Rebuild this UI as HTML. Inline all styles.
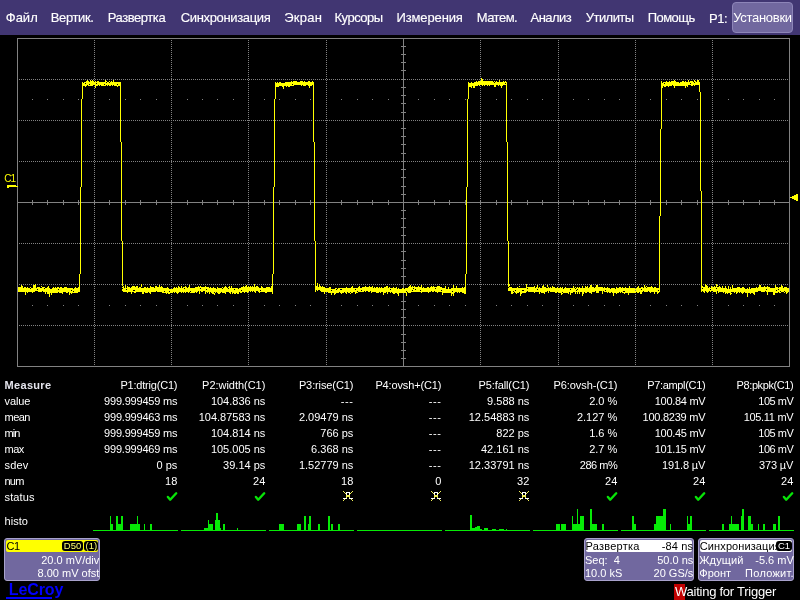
<!DOCTYPE html>
<html><head><meta charset="utf-8"><title>LeCroy</title>
<style>
html,body{margin:0;padding:0;background:#000;}
body{width:800px;height:600px;overflow:hidden;position:relative;font-family:"Liberation Sans",Arial,sans-serif;color:#fff;}
#menu{position:absolute;left:0;top:0;width:800px;height:35px;background:#413672;}
.mi{position:absolute;top:9px;font-size:13px;line-height:16px;color:#fff;white-space:nowrap;-webkit-text-stroke:0.15px #fff}
#setup{position:absolute;left:732px;top:2px;width:61px;height:30.5px;box-sizing:border-box;border:1px solid #8d85b8;border-radius:4px;background:#71689f;font-size:13px;line-height:30px;text-align:center;color:#fff;letter-spacing:-0.3px;white-space:nowrap}
#root{position:absolute;left:0;top:0;width:800px;height:600px;will-change:transform;}
#scope{position:absolute;left:0;top:0;}
.dot{stroke:#828282;stroke-width:1;stroke-dasharray:1 1;shape-rendering:crispEdges}
.lbl{position:absolute;left:4.6px;font-size:11px;line-height:14px;color:#fff;white-space:nowrap;letter-spacing:-0.35px}
.b{font-weight:bold;letter-spacing:0.3px;color:#e4e4ec}
.hdr{letter-spacing:-0.28px !important}
.val{position:absolute;font-size:11px;line-height:14px;color:#fff;white-space:nowrap;text-align:right;letter-spacing:-0.2px}
.ico{position:absolute;line-height:0}
.box{position:absolute;background:#71689f;border:1px solid #a8a2cc;border-radius:3px;box-sizing:border-box;font-size:11px;color:#fff}
.box .hd{position:absolute;left:1px;right:1px;top:1px;height:12px;border-radius:2px;line-height:12px;color:#000;white-space:nowrap}
.box .r{position:absolute;white-space:nowrap;line-height:12px}
.tag{position:absolute;background:#000;color:#ffff70;border-radius:3px;font-size:9.5px;line-height:10px;height:10px;top:1px;text-align:center;letter-spacing:0}
</style></head><body><div id="root">
<div id="menu"><span class="mi" style="left:5.75px;top:10px;letter-spacing:0px">Файл</span><span class="mi" style="left:50.75px;top:10px;letter-spacing:-0.375px">Вертик.</span><span class="mi" style="left:107.75px;top:10px;letter-spacing:-0.44px">Развертка</span><span class="mi" style="left:180.75px;top:10px;letter-spacing:-0.35px">Синхронизация</span><span class="mi" style="left:284.25px;top:10px;letter-spacing:0.25px">Экран</span><span class="mi" style="left:334.5px;top:10px;letter-spacing:-0.5px">Курсоры</span><span class="mi" style="left:396.5px;top:10px;letter-spacing:-0.125px">Измерения</span><span class="mi" style="left:476.7px;top:10px;letter-spacing:-0.5px">Матем.</span><span class="mi" style="left:530.5px;top:10px;letter-spacing:-0.54px">Анализ</span><span class="mi" style="left:585.8px;top:10px;letter-spacing:-0.55px">Утилиты</span><span class="mi" style="left:647.75px;top:10px;letter-spacing:-0.55px">Помощь</span><span class="mi" style="left:709px;top:11px;letter-spacing:-0.5px">P1:</span><div id="setup">Установки</div></div>
<svg id="scope" width="800" height="600" viewBox="0 0 800 600">
<line x1="94.5" y1="40" x2="94.5" y2="366" class="dot"/>
<line x1="171.5" y1="40" x2="171.5" y2="366" class="dot"/>
<line x1="248.5" y1="40" x2="248.5" y2="366" class="dot"/>
<line x1="326.5" y1="40" x2="326.5" y2="366" class="dot"/>
<line x1="480.5" y1="40" x2="480.5" y2="366" class="dot"/>
<line x1="558.5" y1="40" x2="558.5" y2="366" class="dot"/>
<line x1="635.5" y1="40" x2="635.5" y2="366" class="dot"/>
<line x1="712.5" y1="40" x2="712.5" y2="366" class="dot"/>
<line x1="19" y1="79.5" x2="789" y2="79.5" class="dot"/>
<line x1="19" y1="120.5" x2="789" y2="120.5" class="dot"/>
<line x1="19" y1="161.5" x2="789" y2="161.5" class="dot"/>
<line x1="19" y1="243.5" x2="789" y2="243.5" class="dot"/>
<line x1="19" y1="284.5" x2="789" y2="284.5" class="dot"/>
<line x1="19" y1="325.5" x2="789" y2="325.5" class="dot"/>
<rect x="32" y="99" width="1" height="1" fill="#828282"/>
<rect x="47" y="99" width="1" height="1" fill="#828282"/>
<rect x="63" y="99" width="1" height="1" fill="#828282"/>
<rect x="78" y="99" width="1" height="1" fill="#828282"/>
<rect x="109" y="99" width="1" height="1" fill="#828282"/>
<rect x="125" y="99" width="1" height="1" fill="#828282"/>
<rect x="140" y="99" width="1" height="1" fill="#828282"/>
<rect x="156" y="99" width="1" height="1" fill="#828282"/>
<rect x="187" y="99" width="1" height="1" fill="#828282"/>
<rect x="202" y="99" width="1" height="1" fill="#828282"/>
<rect x="217" y="99" width="1" height="1" fill="#828282"/>
<rect x="233" y="99" width="1" height="1" fill="#828282"/>
<rect x="264" y="99" width="1" height="1" fill="#828282"/>
<rect x="279" y="99" width="1" height="1" fill="#828282"/>
<rect x="295" y="99" width="1" height="1" fill="#828282"/>
<rect x="310" y="99" width="1" height="1" fill="#828282"/>
<rect x="341" y="99" width="1" height="1" fill="#828282"/>
<rect x="357" y="99" width="1" height="1" fill="#828282"/>
<rect x="372" y="99" width="1" height="1" fill="#828282"/>
<rect x="388" y="99" width="1" height="1" fill="#828282"/>
<rect x="418" y="99" width="1" height="1" fill="#828282"/>
<rect x="434" y="99" width="1" height="1" fill="#828282"/>
<rect x="449" y="99" width="1" height="1" fill="#828282"/>
<rect x="465" y="99" width="1" height="1" fill="#828282"/>
<rect x="496" y="99" width="1" height="1" fill="#828282"/>
<rect x="511" y="99" width="1" height="1" fill="#828282"/>
<rect x="527" y="99" width="1" height="1" fill="#828282"/>
<rect x="542" y="99" width="1" height="1" fill="#828282"/>
<rect x="573" y="99" width="1" height="1" fill="#828282"/>
<rect x="588" y="99" width="1" height="1" fill="#828282"/>
<rect x="604" y="99" width="1" height="1" fill="#828282"/>
<rect x="619" y="99" width="1" height="1" fill="#828282"/>
<rect x="650" y="99" width="1" height="1" fill="#828282"/>
<rect x="666" y="99" width="1" height="1" fill="#828282"/>
<rect x="681" y="99" width="1" height="1" fill="#828282"/>
<rect x="697" y="99" width="1" height="1" fill="#828282"/>
<rect x="728" y="99" width="1" height="1" fill="#828282"/>
<rect x="743" y="99" width="1" height="1" fill="#828282"/>
<rect x="759" y="99" width="1" height="1" fill="#828282"/>
<rect x="774" y="99" width="1" height="1" fill="#828282"/>
<rect x="32" y="305" width="1" height="1" fill="#828282"/>
<rect x="47" y="305" width="1" height="1" fill="#828282"/>
<rect x="63" y="305" width="1" height="1" fill="#828282"/>
<rect x="78" y="305" width="1" height="1" fill="#828282"/>
<rect x="109" y="305" width="1" height="1" fill="#828282"/>
<rect x="125" y="305" width="1" height="1" fill="#828282"/>
<rect x="140" y="305" width="1" height="1" fill="#828282"/>
<rect x="156" y="305" width="1" height="1" fill="#828282"/>
<rect x="187" y="305" width="1" height="1" fill="#828282"/>
<rect x="202" y="305" width="1" height="1" fill="#828282"/>
<rect x="217" y="305" width="1" height="1" fill="#828282"/>
<rect x="233" y="305" width="1" height="1" fill="#828282"/>
<rect x="264" y="305" width="1" height="1" fill="#828282"/>
<rect x="279" y="305" width="1" height="1" fill="#828282"/>
<rect x="295" y="305" width="1" height="1" fill="#828282"/>
<rect x="310" y="305" width="1" height="1" fill="#828282"/>
<rect x="341" y="305" width="1" height="1" fill="#828282"/>
<rect x="357" y="305" width="1" height="1" fill="#828282"/>
<rect x="372" y="305" width="1" height="1" fill="#828282"/>
<rect x="388" y="305" width="1" height="1" fill="#828282"/>
<rect x="418" y="305" width="1" height="1" fill="#828282"/>
<rect x="434" y="305" width="1" height="1" fill="#828282"/>
<rect x="449" y="305" width="1" height="1" fill="#828282"/>
<rect x="465" y="305" width="1" height="1" fill="#828282"/>
<rect x="496" y="305" width="1" height="1" fill="#828282"/>
<rect x="511" y="305" width="1" height="1" fill="#828282"/>
<rect x="527" y="305" width="1" height="1" fill="#828282"/>
<rect x="542" y="305" width="1" height="1" fill="#828282"/>
<rect x="573" y="305" width="1" height="1" fill="#828282"/>
<rect x="588" y="305" width="1" height="1" fill="#828282"/>
<rect x="604" y="305" width="1" height="1" fill="#828282"/>
<rect x="619" y="305" width="1" height="1" fill="#828282"/>
<rect x="650" y="305" width="1" height="1" fill="#828282"/>
<rect x="666" y="305" width="1" height="1" fill="#828282"/>
<rect x="681" y="305" width="1" height="1" fill="#828282"/>
<rect x="697" y="305" width="1" height="1" fill="#828282"/>
<rect x="728" y="305" width="1" height="1" fill="#828282"/>
<rect x="743" y="305" width="1" height="1" fill="#828282"/>
<rect x="759" y="305" width="1" height="1" fill="#828282"/>
<rect x="774" y="305" width="1" height="1" fill="#828282"/>
<rect x="403" y="38" width="1" height="328" fill="#828282"/>
<rect x="17" y="202" width="772" height="1" fill="#828282"/>
<rect x="32" y="200" width="1" height="5" fill="#828282"/>
<rect x="47" y="200" width="1" height="5" fill="#828282"/>
<rect x="63" y="200" width="1" height="5" fill="#828282"/>
<rect x="78" y="200" width="1" height="5" fill="#828282"/>
<rect x="94" y="200" width="1" height="5" fill="#828282"/>
<rect x="109" y="200" width="1" height="5" fill="#828282"/>
<rect x="125" y="200" width="1" height="5" fill="#828282"/>
<rect x="140" y="200" width="1" height="5" fill="#828282"/>
<rect x="156" y="200" width="1" height="5" fill="#828282"/>
<rect x="171" y="200" width="1" height="5" fill="#828282"/>
<rect x="187" y="200" width="1" height="5" fill="#828282"/>
<rect x="202" y="200" width="1" height="5" fill="#828282"/>
<rect x="217" y="200" width="1" height="5" fill="#828282"/>
<rect x="233" y="200" width="1" height="5" fill="#828282"/>
<rect x="248" y="200" width="1" height="5" fill="#828282"/>
<rect x="264" y="200" width="1" height="5" fill="#828282"/>
<rect x="279" y="200" width="1" height="5" fill="#828282"/>
<rect x="295" y="200" width="1" height="5" fill="#828282"/>
<rect x="310" y="200" width="1" height="5" fill="#828282"/>
<rect x="326" y="200" width="1" height="5" fill="#828282"/>
<rect x="341" y="200" width="1" height="5" fill="#828282"/>
<rect x="357" y="200" width="1" height="5" fill="#828282"/>
<rect x="372" y="200" width="1" height="5" fill="#828282"/>
<rect x="388" y="200" width="1" height="5" fill="#828282"/>
<rect x="403" y="200" width="1" height="5" fill="#828282"/>
<rect x="418" y="200" width="1" height="5" fill="#828282"/>
<rect x="434" y="200" width="1" height="5" fill="#828282"/>
<rect x="449" y="200" width="1" height="5" fill="#828282"/>
<rect x="465" y="200" width="1" height="5" fill="#828282"/>
<rect x="480" y="200" width="1" height="5" fill="#828282"/>
<rect x="496" y="200" width="1" height="5" fill="#828282"/>
<rect x="511" y="200" width="1" height="5" fill="#828282"/>
<rect x="527" y="200" width="1" height="5" fill="#828282"/>
<rect x="542" y="200" width="1" height="5" fill="#828282"/>
<rect x="558" y="200" width="1" height="5" fill="#828282"/>
<rect x="573" y="200" width="1" height="5" fill="#828282"/>
<rect x="588" y="200" width="1" height="5" fill="#828282"/>
<rect x="604" y="200" width="1" height="5" fill="#828282"/>
<rect x="619" y="200" width="1" height="5" fill="#828282"/>
<rect x="635" y="200" width="1" height="5" fill="#828282"/>
<rect x="650" y="200" width="1" height="5" fill="#828282"/>
<rect x="666" y="200" width="1" height="5" fill="#828282"/>
<rect x="681" y="200" width="1" height="5" fill="#828282"/>
<rect x="697" y="200" width="1" height="5" fill="#828282"/>
<rect x="712" y="200" width="1" height="5" fill="#828282"/>
<rect x="728" y="200" width="1" height="5" fill="#828282"/>
<rect x="743" y="200" width="1" height="5" fill="#828282"/>
<rect x="759" y="200" width="1" height="5" fill="#828282"/>
<rect x="774" y="200" width="1" height="5" fill="#828282"/>
<rect x="401" y="46" width="5" height="1" fill="#828282"/>
<rect x="401" y="54" width="5" height="1" fill="#828282"/>
<rect x="401" y="62" width="5" height="1" fill="#828282"/>
<rect x="401" y="70" width="5" height="1" fill="#828282"/>
<rect x="401" y="79" width="5" height="1" fill="#828282"/>
<rect x="401" y="87" width="5" height="1" fill="#828282"/>
<rect x="401" y="95" width="5" height="1" fill="#828282"/>
<rect x="401" y="103" width="5" height="1" fill="#828282"/>
<rect x="401" y="112" width="5" height="1" fill="#828282"/>
<rect x="401" y="120" width="5" height="1" fill="#828282"/>
<rect x="401" y="128" width="5" height="1" fill="#828282"/>
<rect x="401" y="136" width="5" height="1" fill="#828282"/>
<rect x="401" y="144" width="5" height="1" fill="#828282"/>
<rect x="401" y="153" width="5" height="1" fill="#828282"/>
<rect x="401" y="161" width="5" height="1" fill="#828282"/>
<rect x="401" y="169" width="5" height="1" fill="#828282"/>
<rect x="401" y="177" width="5" height="1" fill="#828282"/>
<rect x="401" y="186" width="5" height="1" fill="#828282"/>
<rect x="401" y="194" width="5" height="1" fill="#828282"/>
<rect x="401" y="202" width="5" height="1" fill="#828282"/>
<rect x="401" y="210" width="5" height="1" fill="#828282"/>
<rect x="401" y="218" width="5" height="1" fill="#828282"/>
<rect x="401" y="227" width="5" height="1" fill="#828282"/>
<rect x="401" y="235" width="5" height="1" fill="#828282"/>
<rect x="401" y="243" width="5" height="1" fill="#828282"/>
<rect x="401" y="251" width="5" height="1" fill="#828282"/>
<rect x="401" y="260" width="5" height="1" fill="#828282"/>
<rect x="401" y="268" width="5" height="1" fill="#828282"/>
<rect x="401" y="276" width="5" height="1" fill="#828282"/>
<rect x="401" y="284" width="5" height="1" fill="#828282"/>
<rect x="401" y="292" width="5" height="1" fill="#828282"/>
<rect x="401" y="301" width="5" height="1" fill="#828282"/>
<rect x="401" y="309" width="5" height="1" fill="#828282"/>
<rect x="401" y="317" width="5" height="1" fill="#828282"/>
<rect x="401" y="325" width="5" height="1" fill="#828282"/>
<rect x="401" y="334" width="5" height="1" fill="#828282"/>
<rect x="401" y="342" width="5" height="1" fill="#828282"/>
<rect x="401" y="350" width="5" height="1" fill="#828282"/>
<rect x="401" y="358" width="5" height="1" fill="#828282"/>
<rect x="17.5" y="38.5" width="772" height="328" fill="none" stroke="#828282" stroke-width="1"/>
<g fill="#ffff00"><rect x="82" y="82" width="1" height="17"/><rect x="81" y="99" width="1" height="88"/><rect x="80" y="187" width="1" height="87"/><rect x="79" y="274" width="1" height="18"/><rect x="120" y="85" width="1" height="57"/><rect x="121" y="142" width="1" height="99"/><rect x="122" y="241" width="1" height="45"/><rect x="275" y="82" width="1" height="17"/><rect x="274" y="99" width="1" height="88"/><rect x="273" y="187" width="1" height="87"/><rect x="272" y="274" width="1" height="18"/><rect x="313" y="85" width="1" height="57"/><rect x="314" y="142" width="1" height="99"/><rect x="315" y="241" width="1" height="45"/><rect x="468" y="82" width="1" height="17"/><rect x="467" y="99" width="1" height="88"/><rect x="466" y="187" width="1" height="87"/><rect x="465" y="274" width="1" height="18"/><rect x="506" y="85" width="1" height="57"/><rect x="507" y="142" width="1" height="99"/><rect x="508" y="241" width="1" height="45"/><rect x="661" y="82" width="1" height="47"/><rect x="660" y="129" width="1" height="87"/><rect x="659" y="216" width="1" height="76"/><rect x="699" y="85" width="1" height="7"/><rect x="700" y="92" width="1" height="99"/><rect x="701" y="191" width="1" height="95"/></g>
<path d="M18.5 287V292M19.5 287V292M20.5 287V292M21.5 285V292M22.5 286V292M23.5 288V292M24.5 287V292M25.5 287V295M26.5 288V292M27.5 287V293M28.5 288V292M29.5 288V292M30.5 287V288M30.5 289V292M31.5 288V292M32.5 288V293M33.5 285V292M34.5 285V292M35.5 284V291M36.5 288V291M37.5 287V289M37.5 290V291M38.5 287V292M39.5 287V292M40.5 288V292M41.5 286V287M41.5 288V292M42.5 287V291M43.5 287V292M44.5 287V288M44.5 289V292M45.5 288V294M46.5 288V292M47.5 287V294M48.5 286V294M49.5 288V297M50.5 289V293M51.5 289V295M52.5 288V293M53.5 287V293M54.5 288V293M55.5 287V293M56.5 288V293M57.5 287V293M58.5 287V289M58.5 290V292M59.5 288V293M60.5 287V293M61.5 287V293M62.5 288V294M63.5 288V292M64.5 287V292M65.5 287V292M66.5 287V293M67.5 288V293M68.5 288V292M69.5 288V295M70.5 288V293M71.5 288V290M71.5 291V294M72.5 288V293M73.5 289V291M73.5 292V293M74.5 288V293M75.5 287V293M76.5 288V293M77.5 288V293M78.5 287V292M79.5 288V292M82.5 83V86M83.5 83V86M84.5 82V86M85.5 82V83M85.5 84V87M86.5 81V86M87.5 80V85M88.5 81V86M89.5 82V84M89.5 85V86M90.5 80V86M91.5 81V86M92.5 80V86M93.5 81V85M94.5 82V85M95.5 81V88M96.5 82V83M96.5 84V86M97.5 81V86M98.5 81V85M99.5 82V86M100.5 82V85M101.5 82V86M102.5 82V86M103.5 82V86M104.5 82V84M104.5 85V86M105.5 80V86M106.5 81V82M106.5 83V85M107.5 82V86M108.5 82V85M109.5 81V82M109.5 83V86M110.5 82V86M111.5 81V85M112.5 82V86M113.5 80V85M114.5 82V86M115.5 82V86M116.5 82V86M117.5 82V84M117.5 85V87M118.5 82V86M119.5 82V86M120.5 82V86M122.5 287V288M122.5 289V291M123.5 286V292M124.5 288V292M125.5 285V292M126.5 288V289M126.5 290V292M127.5 286V293M128.5 287V292M129.5 287V292M130.5 288V292M131.5 287V294M132.5 286V292M133.5 286V290M133.5 291V292M134.5 286V290M134.5 291V293M135.5 287V293M136.5 286V292M137.5 286V292M138.5 288V292M139.5 287V292M140.5 287V292M141.5 284V287M141.5 288V292M142.5 288V294M143.5 288V294M144.5 287V292M145.5 287V293M146.5 288V293M147.5 287V293M148.5 288V292M149.5 288V293M150.5 286V294M151.5 287V292M152.5 287V292M153.5 287V292M154.5 288V292M155.5 286V292M156.5 286V291M157.5 287V292M158.5 287V292M159.5 285V292M160.5 287V292M161.5 286V292M162.5 287V293M163.5 288V293M164.5 288V291M164.5 292V293M165.5 288V293M166.5 288V294M167.5 287V293M168.5 288V294M169.5 289V291M169.5 292V294M170.5 289V293M171.5 289V293M172.5 289V293M173.5 288V292M174.5 287V293M175.5 288V292M176.5 287V293M177.5 288V294M178.5 286V293M179.5 287V292M180.5 288V292M181.5 286V293M182.5 288V292M183.5 287V293M184.5 287V288M184.5 289V292M185.5 286V293M186.5 287V292M187.5 288V292M188.5 287V293M189.5 285V292M190.5 288V291M190.5 292V293M191.5 288V293M192.5 288V293M193.5 288V293M194.5 288V293M195.5 287V292M196.5 287V293M197.5 287V292M198.5 286V291M199.5 287V294M200.5 286V288M200.5 289V291M201.5 287V292M202.5 287V292M203.5 287V291M204.5 287V291M205.5 286V294M206.5 287V289M206.5 290V292M207.5 287V293M208.5 287V292M209.5 288V294M210.5 287V292M211.5 288V293M212.5 288V294M213.5 287V294M214.5 288V292M214.5 293V295M215.5 288V293M216.5 289V292M217.5 287V293M218.5 288V294M219.5 288V294M220.5 288V293M221.5 288V292M222.5 287V288M222.5 289V293M223.5 288V293M224.5 287V293M225.5 286V294M226.5 287V292M227.5 288V292M228.5 287V288M228.5 289V292M229.5 286V293M230.5 288V294M231.5 286V292M232.5 288V294M233.5 288V293M234.5 288V289M234.5 290V294M235.5 288V294M236.5 288V293M237.5 288V294M238.5 289V294M239.5 288V292M240.5 288V293M241.5 287V290M241.5 291V293M242.5 287V292M243.5 286V292M244.5 287V293M245.5 286V292M246.5 285V292M247.5 287V293M248.5 286V292M249.5 287V291M250.5 286V292M251.5 287V291M252.5 286V292M253.5 287V291M254.5 284V292M255.5 287V293M256.5 286V291M257.5 286V291M258.5 287V292M259.5 288V293M260.5 288V290M260.5 291V292M261.5 286V292M262.5 287V292M263.5 288V292M264.5 288V292M265.5 288V293M266.5 287V293M267.5 287V292M268.5 287V292M269.5 287V292M270.5 288V292M271.5 286V292M272.5 288V294M275.5 83V87M276.5 83V87M277.5 82V87M278.5 83V87M279.5 82V86M280.5 82V86M281.5 83V86M282.5 83V87M283.5 83V89M284.5 83V86M285.5 82V86M286.5 82V87M287.5 82V86M288.5 82V87M289.5 82V87M290.5 82V86M291.5 81V86M292.5 82V84M292.5 85V86M293.5 81V86M294.5 81V85M295.5 81V85M296.5 81V85M297.5 82V85M298.5 82V85M299.5 82V85M300.5 81V85M301.5 81V86M302.5 81V85M303.5 82V86M304.5 81V86M305.5 82V86M306.5 82V85M307.5 82V85M308.5 81V86M309.5 81V88M310.5 82V86M311.5 82V86M312.5 81V85M313.5 82V85M315.5 286V292M316.5 286V290M317.5 283V291M318.5 287V290M319.5 284V290M320.5 286V291M321.5 287V292M322.5 286V292M323.5 287V292M324.5 287V294M325.5 288V292M326.5 288V292M327.5 288V292M328.5 288V293M329.5 287V293M330.5 287V293M331.5 289V290M331.5 291V295M332.5 289V293M333.5 289V293M334.5 289V295M335.5 288V294M336.5 288V289M336.5 290V293M337.5 289V293M338.5 288V293M339.5 288V292M340.5 288V289M340.5 290V293M341.5 288V289M341.5 290V294M342.5 288V293M343.5 288V293M344.5 288V292M345.5 288V293M346.5 287V294M347.5 288V292M348.5 288V293M349.5 288V293M350.5 288V292M350.5 293V294M351.5 287V293M352.5 286V293M353.5 288V292M354.5 288V292M355.5 288V289M355.5 290V294M356.5 288V293M357.5 288V291M357.5 292V293M358.5 287V292M359.5 286V292M360.5 288V292M361.5 288V290M361.5 291V292M362.5 287V292M363.5 287V292M364.5 287V291M365.5 286V292M366.5 287V291M367.5 287V291M368.5 287V292M369.5 286V292M370.5 287V291M371.5 287V293M372.5 286V292M373.5 288V292M374.5 287V292M375.5 288V292M376.5 287V293M377.5 287V293M378.5 288V293M379.5 287V292M380.5 288V293M381.5 287V292M382.5 288V292M383.5 288V295M384.5 287V293M385.5 287V293M386.5 286V292M387.5 286V294M388.5 288V292M389.5 287V292M390.5 288V289M390.5 290V293M391.5 288V292M392.5 288V293M393.5 287V294M394.5 288V294M395.5 288V293M396.5 287V293M397.5 289V294M398.5 288V296M399.5 289V293M400.5 289V293M401.5 289V293M402.5 288V293M403.5 288V293M404.5 289V293M405.5 288V293M406.5 288V291M406.5 292V296M407.5 288V292M408.5 287V293M409.5 286V293M410.5 285V293M411.5 287V292M412.5 286V290M412.5 291V292M413.5 287V288M413.5 289V292M414.5 286V292M415.5 287V289M415.5 290V292M416.5 287V292M417.5 287V292M418.5 286V292M419.5 287V292M420.5 287V290M420.5 291V292M421.5 285V293M422.5 288V292M423.5 287V292M424.5 288V292M425.5 288V292M426.5 288V292M427.5 287V292M428.5 287V293M429.5 288V292M430.5 287V292M431.5 286V291M432.5 287V292M433.5 286V292M434.5 287V291M435.5 287V288M435.5 289V292M436.5 287V292M437.5 286V293M438.5 286V292M439.5 286V292M440.5 287V292M441.5 287V290M441.5 291V292M442.5 288V295M443.5 288V293M444.5 288V293M445.5 286V293M446.5 289V293M447.5 289V293M448.5 287V293M449.5 289V293M450.5 289V293M451.5 288V296M452.5 288V291M452.5 292V294M453.5 285V296M454.5 288V293M455.5 288V292M456.5 286V292M457.5 288V293M458.5 288V292M459.5 288V293M460.5 288V292M461.5 288V292M462.5 287V293M463.5 288V293M464.5 287V294M465.5 288V294M468.5 84V88M469.5 83V87M470.5 83V87M471.5 82V88M472.5 83V86M473.5 83V88M474.5 82V88M475.5 82V86M476.5 81V86M477.5 82V86M478.5 81V85M479.5 81V86M480.5 81V85M481.5 78V85M482.5 79V86M483.5 81V85M484.5 81V86M485.5 81V85M486.5 81V85M487.5 81V86M488.5 81V85M489.5 81V86M490.5 81V85M491.5 81V85M492.5 81V85M493.5 82V85M494.5 81V82M494.5 83V87M495.5 82V87M496.5 81V85M497.5 82V85M498.5 82V86M499.5 80V85M500.5 82V86M501.5 82V88M502.5 82V86M503.5 81V85M504.5 82V85M505.5 81V83M505.5 84V85M506.5 82V86M508.5 286V287M508.5 288V291M509.5 284V286M509.5 287V291M510.5 287V291M511.5 287V294M512.5 288V294M513.5 288V291M513.5 292V293M514.5 288V292M515.5 288V290M515.5 291V293M516.5 288V294M517.5 287V293M518.5 288V293M519.5 286V287M519.5 288V292M520.5 288V296M521.5 288V294M522.5 288V290M522.5 291V293M523.5 288V290M523.5 291V293M524.5 288V293M525.5 288V293M526.5 284V292M527.5 287V288M527.5 289V291M528.5 287V292M529.5 287V292M530.5 287V292M531.5 287V292M532.5 287V292M533.5 287V292M534.5 286V293M535.5 288V292M536.5 287V292M537.5 285V289M537.5 290V292M538.5 288V292M539.5 287V294M540.5 288V292M541.5 288V293M542.5 286V293M543.5 285V293M544.5 287V294M545.5 287V292M546.5 288V292M547.5 285V287M547.5 288V291M548.5 287V293M549.5 288V291M550.5 287V292M551.5 288V292M552.5 286V292M553.5 287V292M554.5 287V292M555.5 288V293M556.5 288V293M557.5 287V292M558.5 288V293M559.5 288V293M560.5 287V293M561.5 288V295M562.5 287V292M562.5 293V294M563.5 289V293M564.5 288V293M565.5 287V293M566.5 288V293M567.5 288V293M568.5 288V294M569.5 288V292M570.5 288V289M570.5 290V295M571.5 288V293M572.5 288V293M573.5 286V292M574.5 288V292M575.5 287V288M575.5 289V294M576.5 288V290M576.5 291V292M577.5 287V289M577.5 290V294M578.5 288V292M579.5 287V294M580.5 288V292M581.5 288V292M582.5 286V296M583.5 288V294M584.5 288V292M585.5 286V293M586.5 287V293M587.5 286V292M588.5 288V292M589.5 287V293M590.5 285V293M591.5 285V294M592.5 287V292M593.5 287V292M594.5 288V292M595.5 287V291M596.5 285V293M597.5 285V293M598.5 287V293M599.5 287V291M600.5 287V291M601.5 287V291M602.5 287V294M603.5 288V291M604.5 287V292M605.5 288V290M605.5 291V292M606.5 288V292M607.5 287V293M608.5 288V292M609.5 288V293M610.5 289V293M611.5 288V292M612.5 288V293M613.5 288V296M614.5 288V293M615.5 289V293M616.5 287V294M617.5 288V293M618.5 288V293M619.5 287V292M620.5 287V293M621.5 288V292M622.5 287V293M623.5 288V291M623.5 292V293M624.5 288V291M624.5 292V294M625.5 287V293M626.5 288V293M627.5 288V293M628.5 288V295M629.5 286V293M630.5 288V293M631.5 288V293M632.5 288V293M633.5 288V293M634.5 288V293M635.5 289V290M635.5 291V293M636.5 288V292M637.5 287V293M638.5 286V293M639.5 288V292M640.5 288V294M641.5 287V289M641.5 290V294M642.5 287V292M643.5 288V291M644.5 285V292M645.5 287V292M646.5 286V287M646.5 288V292M647.5 287V292M648.5 287V291M649.5 287V292M650.5 287V293M651.5 286V292M652.5 287V292M653.5 288V292M654.5 287V294M655.5 287V292M656.5 288V292M657.5 288V294M658.5 288V290M658.5 291V293M661.5 81V87M662.5 83V88M663.5 82V86M664.5 82V83M664.5 84V87M665.5 82V87M666.5 81V86M667.5 82V86M668.5 82V87M669.5 81V86M670.5 82V86M671.5 81V86M672.5 81V85M673.5 81V86M674.5 80V88M675.5 81V86M676.5 82V86M677.5 82V86M678.5 82V86M679.5 83V86M680.5 82V86M681.5 82V86M682.5 81V86M683.5 81V86M684.5 82V86M685.5 81V88M686.5 82V86M687.5 82V87M688.5 80V85M689.5 82V85M690.5 81V83M690.5 84V85M691.5 81V86M692.5 81V86M693.5 82V85M694.5 80V82M694.5 83V86M695.5 81V85M696.5 82V85M697.5 80V85M698.5 80V85M699.5 82V85M701.5 286V292M702.5 286V288M702.5 289V291M703.5 287V292M704.5 287V293M705.5 284V291M706.5 285V292M707.5 286V293M708.5 288V292M709.5 287V291M710.5 288V289M710.5 290V292M711.5 286V291M712.5 287V291M713.5 287V292M714.5 286V292M715.5 287V292M716.5 284V288M716.5 289V294M717.5 285V286M717.5 287V291M718.5 287V293M719.5 286V292M720.5 287V292M721.5 288V292M722.5 286V292M723.5 288V293M724.5 288V292M725.5 286V294M726.5 288V293M727.5 289V294M728.5 286V293M729.5 289V293M730.5 287V295M731.5 289V292M731.5 293V294M732.5 285V292M733.5 288V292M734.5 288V293M735.5 288V292M736.5 288V294M737.5 287V293M738.5 287V292M739.5 287V293M740.5 288V292M741.5 288V293M742.5 287V294M743.5 287V293M744.5 288V292M745.5 289V293M746.5 289V293M747.5 288V297M748.5 289V293M749.5 287V293M750.5 289V294M751.5 288V293M752.5 288V293M753.5 288V294M754.5 288V295M755.5 288V292M756.5 287V292M757.5 288V292M758.5 287V291M759.5 285V291M760.5 285V291M761.5 287V292M762.5 287V292M763.5 287V292M764.5 286V292M765.5 287V291M766.5 287V289M766.5 290V292M767.5 286V295M768.5 287V292M769.5 287V292M770.5 288V292M771.5 288V292M772.5 288V292M773.5 288V295M774.5 288V295M775.5 285V293M776.5 287V290M776.5 291V293M777.5 287V293M778.5 288V289M778.5 290V292M779.5 287V293M780.5 287V291M780.5 292V293M781.5 285V292M782.5 286V292M783.5 288V292M784.5 287V291M784.5 292V293M785.5 287V292M786.5 287V294M787.5 288V293M788.5 288V292" stroke="#ffff00" stroke-width="1" fill="none" shape-rendering="crispEdges"/>
<path d="M7 185H16V186H18V187H9V188H7Z" fill="#ffff00" shape-rendering="crispEdges"/>
<path d="M790 197H792V196H794V195H796V194H798V201H796V200H794V199H792V198H790Z" fill="#ffff00" shape-rendering="crispEdges"/>
<rect x="93" y="530" width="85" height="1" fill="#06ea06"/>
<rect x="110" y="516" width="1" height="14" fill="#06ea06"/>
<rect x="111" y="524" width="2" height="6" fill="#06ea06"/>
<rect x="116" y="516" width="2" height="14" fill="#06ea06"/>
<rect x="118" y="524" width="3" height="6" fill="#06ea06"/>
<rect x="121" y="516" width="2" height="14" fill="#06ea06"/>
<rect x="130" y="524" width="10" height="6" fill="#06ea06"/>
<rect x="137" y="516" width="1" height="14" fill="#06ea06"/>
<rect x="144" y="524" width="1" height="6" fill="#06ea06"/>
<rect x="150" y="524" width="2" height="6" fill="#06ea06"/>
<rect x="181" y="530" width="85" height="1" fill="#06ea06"/>
<rect x="204" y="528" width="4" height="2" fill="#06ea06"/>
<rect x="208" y="520" width="1" height="10" fill="#06ea06"/>
<rect x="209" y="524" width="4" height="6" fill="#06ea06"/>
<rect x="215" y="520" width="5" height="10" fill="#06ea06"/>
<rect x="216" y="513" width="2" height="17" fill="#06ea06"/>
<rect x="220" y="528" width="1" height="2" fill="#06ea06"/>
<rect x="223" y="524" width="2" height="6" fill="#06ea06"/>
<rect x="237" y="528" width="1" height="2" fill="#06ea06"/>
<rect x="269" y="530" width="85" height="1" fill="#06ea06"/>
<rect x="279" y="524" width="5" height="6" fill="#06ea06"/>
<rect x="297" y="524" width="4" height="6" fill="#06ea06"/>
<rect x="304" y="516" width="2" height="14" fill="#06ea06"/>
<rect x="308" y="524" width="1" height="6" fill="#06ea06"/>
<rect x="309" y="516" width="2" height="14" fill="#06ea06"/>
<rect x="318" y="524" width="2" height="6" fill="#06ea06"/>
<rect x="328" y="516" width="2" height="14" fill="#06ea06"/>
<rect x="331" y="524" width="2" height="6" fill="#06ea06"/>
<rect x="338" y="524" width="2" height="6" fill="#06ea06"/>
<rect x="357" y="530" width="85" height="1" fill="#06ea06"/>
<rect x="445" y="530" width="85" height="1" fill="#06ea06"/>
<rect x="470" y="515" width="2" height="15" fill="#06ea06"/>
<rect x="472" y="528" width="3" height="2" fill="#06ea06"/>
<rect x="475" y="527" width="2" height="3" fill="#06ea06"/>
<rect x="477" y="526" width="3" height="4" fill="#06ea06"/>
<rect x="480" y="529" width="2" height="1" fill="#06ea06"/>
<rect x="484" y="528" width="4" height="2" fill="#06ea06"/>
<rect x="492" y="529" width="4" height="1" fill="#06ea06"/>
<rect x="499" y="529" width="5" height="1" fill="#06ea06"/>
<rect x="506" y="529" width="1" height="1" fill="#06ea06"/>
<rect x="533" y="530" width="85" height="1" fill="#06ea06"/>
<rect x="556" y="524" width="4" height="6" fill="#06ea06"/>
<rect x="561" y="524" width="5" height="6" fill="#06ea06"/>
<rect x="572" y="516" width="1" height="14" fill="#06ea06"/>
<rect x="573" y="524" width="7" height="6" fill="#06ea06"/>
<rect x="577" y="509" width="1" height="21" fill="#06ea06"/>
<rect x="580" y="516" width="4" height="14" fill="#06ea06"/>
<rect x="590" y="509" width="2" height="21" fill="#06ea06"/>
<rect x="592" y="524" width="5" height="6" fill="#06ea06"/>
<rect x="602" y="524" width="2" height="6" fill="#06ea06"/>
<rect x="621" y="530" width="85" height="1" fill="#06ea06"/>
<rect x="632" y="516" width="2" height="14" fill="#06ea06"/>
<rect x="634" y="524" width="2" height="6" fill="#06ea06"/>
<rect x="654" y="524" width="2" height="6" fill="#06ea06"/>
<rect x="656" y="516" width="7" height="14" fill="#06ea06"/>
<rect x="663" y="509" width="3" height="21" fill="#06ea06"/>
<rect x="670" y="524" width="1" height="6" fill="#06ea06"/>
<rect x="687" y="516" width="1" height="14" fill="#06ea06"/>
<rect x="688" y="524" width="2" height="6" fill="#06ea06"/>
<rect x="690" y="516" width="2" height="14" fill="#06ea06"/>
<rect x="709" y="530" width="85" height="1" fill="#06ea06"/>
<rect x="722" y="524" width="2" height="6" fill="#06ea06"/>
<rect x="729" y="524" width="10" height="6" fill="#06ea06"/>
<rect x="731" y="516" width="1" height="14" fill="#06ea06"/>
<rect x="741" y="516" width="1" height="14" fill="#06ea06"/>
<rect x="742" y="509" width="2" height="21" fill="#06ea06"/>
<rect x="748" y="516" width="3" height="14" fill="#06ea06"/>
<rect x="751" y="524" width="2" height="6" fill="#06ea06"/>
<rect x="758" y="524" width="1" height="6" fill="#06ea06"/>
<rect x="763" y="524" width="2" height="6" fill="#06ea06"/>
<rect x="773" y="524" width="3" height="6" fill="#06ea06"/>
<rect x="778" y="516" width="2" height="14" fill="#06ea06"/>
</svg>
<div style="position:absolute;left:4.2px;top:172.5px;font-size:10px;line-height:12px;color:#ffff00;letter-spacing:-0.9px">C1</div>
<div class="lbl b" style="top:378px;letter-spacing:0.3px">Measure</div>
<div class="lbl" style="top:394px;letter-spacing:-0.15px">value</div>
<div class="lbl" style="top:410px;letter-spacing:-0.6px">mean</div>
<div class="lbl" style="top:426px;letter-spacing:-1.0px">min</div>
<div class="lbl" style="top:442px;letter-spacing:-0.5px">max</div>
<div class="lbl" style="top:458px;letter-spacing:0.1px">sdev</div>
<div class="lbl" style="top:474px;letter-spacing:-0.85px">num</div>
<div class="lbl" style="top:490px;letter-spacing:0.1px">status</div>
<div class="lbl" style="top:514px;letter-spacing:0">histo</div>
<div class="val" style="top:378px;right:622.7px;letter-spacing:-0.2px">P1:dtrig(C1)</div>
<div class="val" style="top:394px;right:622.7px;letter-spacing:-0.2px">999.999459 ms</div>
<div class="val" style="top:410px;right:622.7px;letter-spacing:-0.2px">999.999463 ms</div>
<div class="val" style="top:426px;right:622.7px;letter-spacing:-0.2px">999.999459 ms</div>
<div class="val" style="top:442px;right:622.7px;letter-spacing:-0.2px">999.999469 ms</div>
<div class="val" style="top:458px;right:622.7px;letter-spacing:0px">0 ps</div>
<div class="val" style="top:474px;right:622.7px;letter-spacing:0px">18</div>
<div class="ico" style="top:491px;left:165px"><svg width="13" height="11" viewBox="0 0 13 11"><path d="M2.9 6 L5.2 8.7 L11.2 2.3" stroke="#08e408" stroke-width="2.4" stroke-linecap="round" stroke-linejoin="round" fill="none"/></svg></div>
<div class="val" style="top:378px;right:534.7px;letter-spacing:-0.03px">P2:width(C1)</div>
<div class="val" style="top:394px;right:534.7px;letter-spacing:0px">104.836 ns</div>
<div class="val" style="top:410px;right:534.7px;letter-spacing:0px">104.87583 ns</div>
<div class="val" style="top:426px;right:534.7px;letter-spacing:0px">104.814 ns</div>
<div class="val" style="top:442px;right:534.7px;letter-spacing:0px">105.005 ns</div>
<div class="val" style="top:458px;right:534.7px;letter-spacing:0px">39.14 ps</div>
<div class="val" style="top:474px;right:534.7px;letter-spacing:0px">24</div>
<div class="ico" style="top:491px;left:253px"><svg width="13" height="11" viewBox="0 0 13 11"><path d="M2.9 6 L5.2 8.7 L11.2 2.3" stroke="#08e408" stroke-width="2.4" stroke-linecap="round" stroke-linejoin="round" fill="none"/></svg></div>
<div class="val" style="top:378px;right:446.7px;letter-spacing:-0.11px">P3:rise(C1)</div>
<div class="val" style="top:394px;right:446.7px;letter-spacing:0.5px">---</div>
<div class="val" style="top:410px;right:446.7px;letter-spacing:0px">2.09479 ns</div>
<div class="val" style="top:426px;right:446.7px;letter-spacing:0px">766 ps</div>
<div class="val" style="top:442px;right:446.7px;letter-spacing:0px">6.368 ns</div>
<div class="val" style="top:458px;right:446.7px;letter-spacing:0px">1.52779 ns</div>
<div class="val" style="top:474px;right:446.7px;letter-spacing:0px">18</div>
<div class="ico" style="top:491px;left:343px"><svg width="10" height="10" viewBox="0 0 10 10" shape-rendering="crispEdges"><rect x="0" y="0" width="1" height="1" fill="#eeee55"/><rect x="9" y="0" width="1" height="1" fill="#eeee55"/><rect x="1" y="1" width="1" height="1" fill="#eeee55"/><rect x="8" y="1" width="1" height="1" fill="#eeee55"/><rect x="2" y="2" width="1" height="1" fill="#eeee55"/><rect x="7" y="2" width="1" height="1" fill="#eeee55"/><rect x="3" y="4" width="4" height="1" fill="#eeee55"/><rect x="3" y="5" width="4" height="1" fill="#eeee55"/><rect x="3" y="6" width="1" height="1" fill="#eeee55"/><rect x="6" y="6" width="1" height="1" fill="#eeee55"/><rect x="1" y="8" width="1" height="1" fill="#eeee55"/><rect x="8" y="8" width="1" height="1" fill="#eeee55"/><rect x="0" y="9" width="1" height="1" fill="#eeee55"/><rect x="9" y="9" width="1" height="1" fill="#eeee55"/><rect x="3" y="1" width="4" height="1" fill="#ffffff"/><rect x="3" y="2" width="1" height="1" fill="#ffffff"/><rect x="6" y="2" width="1" height="1" fill="#ffffff"/><rect x="3" y="3" width="1" height="1" fill="#ffffff"/><rect x="6" y="3" width="1" height="1" fill="#ffffff"/><rect x="0" y="7" width="4" height="1" fill="#ffffff"/><rect x="6" y="7" width="4" height="1" fill="#ffffff"/></svg></div>
<div class="val" style="top:378px;right:358.7px;letter-spacing:-0.14px">P4:ovsh+(C1)</div>
<div class="val" style="top:394px;right:358.7px;letter-spacing:0.5px">---</div>
<div class="val" style="top:410px;right:358.7px;letter-spacing:0.5px">---</div>
<div class="val" style="top:426px;right:358.7px;letter-spacing:0.5px">---</div>
<div class="val" style="top:442px;right:358.7px;letter-spacing:0.5px">---</div>
<div class="val" style="top:458px;right:358.7px;letter-spacing:0.5px">---</div>
<div class="val" style="top:474px;right:358.7px;letter-spacing:0px">0</div>
<div class="ico" style="top:491px;left:431px"><svg width="10" height="10" viewBox="0 0 10 10" shape-rendering="crispEdges"><rect x="0" y="0" width="1" height="1" fill="#eeee55"/><rect x="9" y="0" width="1" height="1" fill="#eeee55"/><rect x="1" y="1" width="1" height="1" fill="#eeee55"/><rect x="8" y="1" width="1" height="1" fill="#eeee55"/><rect x="2" y="2" width="1" height="1" fill="#eeee55"/><rect x="7" y="2" width="1" height="1" fill="#eeee55"/><rect x="3" y="4" width="4" height="1" fill="#eeee55"/><rect x="3" y="5" width="4" height="1" fill="#eeee55"/><rect x="3" y="6" width="1" height="1" fill="#eeee55"/><rect x="6" y="6" width="1" height="1" fill="#eeee55"/><rect x="1" y="8" width="1" height="1" fill="#eeee55"/><rect x="8" y="8" width="1" height="1" fill="#eeee55"/><rect x="0" y="9" width="1" height="1" fill="#eeee55"/><rect x="9" y="9" width="1" height="1" fill="#eeee55"/><rect x="3" y="1" width="4" height="1" fill="#ffffff"/><rect x="3" y="2" width="1" height="1" fill="#ffffff"/><rect x="6" y="2" width="1" height="1" fill="#ffffff"/><rect x="3" y="3" width="1" height="1" fill="#ffffff"/><rect x="6" y="3" width="1" height="1" fill="#ffffff"/><rect x="0" y="7" width="4" height="1" fill="#ffffff"/><rect x="6" y="7" width="4" height="1" fill="#ffffff"/></svg></div>
<div class="val" style="top:378px;right:270.70000000000005px;letter-spacing:-0.11px">P5:fall(C1)</div>
<div class="val" style="top:394px;right:270.70000000000005px;letter-spacing:0px">9.588 ns</div>
<div class="val" style="top:410px;right:270.70000000000005px;letter-spacing:0px">12.54883 ns</div>
<div class="val" style="top:426px;right:270.70000000000005px;letter-spacing:0px">822 ps</div>
<div class="val" style="top:442px;right:270.70000000000005px;letter-spacing:0px">42.161 ns</div>
<div class="val" style="top:458px;right:270.70000000000005px;letter-spacing:0px">12.33791 ns</div>
<div class="val" style="top:474px;right:270.70000000000005px;letter-spacing:0px">32</div>
<div class="ico" style="top:491px;left:519px"><svg width="10" height="10" viewBox="0 0 10 10" shape-rendering="crispEdges"><rect x="0" y="0" width="1" height="1" fill="#eeee55"/><rect x="9" y="0" width="1" height="1" fill="#eeee55"/><rect x="1" y="1" width="1" height="1" fill="#eeee55"/><rect x="8" y="1" width="1" height="1" fill="#eeee55"/><rect x="2" y="2" width="1" height="1" fill="#eeee55"/><rect x="7" y="2" width="1" height="1" fill="#eeee55"/><rect x="3" y="4" width="4" height="1" fill="#eeee55"/><rect x="3" y="5" width="4" height="1" fill="#eeee55"/><rect x="3" y="6" width="1" height="1" fill="#eeee55"/><rect x="6" y="6" width="1" height="1" fill="#eeee55"/><rect x="1" y="8" width="1" height="1" fill="#eeee55"/><rect x="8" y="8" width="1" height="1" fill="#eeee55"/><rect x="0" y="9" width="1" height="1" fill="#eeee55"/><rect x="9" y="9" width="1" height="1" fill="#eeee55"/><rect x="3" y="1" width="4" height="1" fill="#ffffff"/><rect x="3" y="2" width="1" height="1" fill="#ffffff"/><rect x="6" y="2" width="1" height="1" fill="#ffffff"/><rect x="3" y="3" width="1" height="1" fill="#ffffff"/><rect x="6" y="3" width="1" height="1" fill="#ffffff"/><rect x="0" y="7" width="4" height="1" fill="#ffffff"/><rect x="6" y="7" width="4" height="1" fill="#ffffff"/></svg></div>
<div class="val" style="top:378px;right:182.70000000000005px;letter-spacing:-0.09px">P6:ovsh-(C1)</div>
<div class="val" style="top:394px;right:182.70000000000005px;letter-spacing:0px">2.0 %</div>
<div class="val" style="top:410px;right:182.70000000000005px;letter-spacing:0px">2.127 %</div>
<div class="val" style="top:426px;right:182.70000000000005px;letter-spacing:0px">1.6 %</div>
<div class="val" style="top:442px;right:182.70000000000005px;letter-spacing:0px">2.7 %</div>
<div class="val" style="top:458px;right:182.70000000000005px;letter-spacing:-0.48px">286 m%</div>
<div class="val" style="top:474px;right:182.70000000000005px;letter-spacing:0px">24</div>
<div class="ico" style="top:491px;left:605px"><svg width="13" height="11" viewBox="0 0 13 11"><path d="M2.9 6 L5.2 8.7 L11.2 2.3" stroke="#08e408" stroke-width="2.4" stroke-linecap="round" stroke-linejoin="round" fill="none"/></svg></div>
<div class="val" style="top:378px;right:94.70000000000005px;letter-spacing:-0.33px">P7:ampl(C1)</div>
<div class="val" style="top:394px;right:94.70000000000005px;letter-spacing:-0.3px">100.84 mV</div>
<div class="val" style="top:410px;right:94.70000000000005px;letter-spacing:-0.24px">100.8239 mV</div>
<div class="val" style="top:426px;right:94.70000000000005px;letter-spacing:-0.3px">100.45 mV</div>
<div class="val" style="top:442px;right:94.70000000000005px;letter-spacing:-0.3px">101.15 mV</div>
<div class="val" style="top:458px;right:94.70000000000005px;letter-spacing:-0.12px">191.8 µV</div>
<div class="val" style="top:474px;right:94.70000000000005px;letter-spacing:0px">24</div>
<div class="ico" style="top:491px;left:693px"><svg width="13" height="11" viewBox="0 0 13 11"><path d="M2.9 6 L5.2 8.7 L11.2 2.3" stroke="#08e408" stroke-width="2.4" stroke-linecap="round" stroke-linejoin="round" fill="none"/></svg></div>
<div class="val" style="top:378px;right:6.7000000000000455px;letter-spacing:-0.4px">P8:pkpk(C1)</div>
<div class="val" style="top:394px;right:6.7000000000000455px;letter-spacing:-0.48px">105 mV</div>
<div class="val" style="top:410px;right:6.7000000000000455px;letter-spacing:-0.3px">105.11 mV</div>
<div class="val" style="top:426px;right:6.7000000000000455px;letter-spacing:-0.48px">105 mV</div>
<div class="val" style="top:442px;right:6.7000000000000455px;letter-spacing:-0.48px">106 mV</div>
<div class="val" style="top:458px;right:6.7000000000000455px;letter-spacing:-0.12px">373 µV</div>
<div class="val" style="top:474px;right:6.7000000000000455px;letter-spacing:0px">24</div>
<div class="ico" style="top:491px;left:781px"><svg width="13" height="11" viewBox="0 0 13 11"><path d="M2.9 6 L5.2 8.7 L11.2 2.3" stroke="#08e408" stroke-width="2.4" stroke-linecap="round" stroke-linejoin="round" fill="none"/></svg></div>
<div class="box" style="left:4px;top:538px;width:96px;height:42.5px">
 <div class="hd" style="background:#ffff00"><span style="position:absolute;left:0.5px;letter-spacing:-0.4px">C1</span><span class="tag" style="left:56px;width:21px">D50</span><span class="tag" style="left:78.4px;width:13.8px">(1)</span></div>
 <div class="r" style="right:-0.3px;top:15px">20.0 mV/div</div>
 <div class="r" style="right:-0.3px;top:28px">8.00 mV ofst</div>
</div>
<div class="box" style="left:584px;top:538px;width:110px;height:42.5px">
 <div class="hd" style="background:#fff"><span style="position:absolute;left:-0.5px;letter-spacing:0.25px">Развертка</span><span style="position:absolute;right:-1.2px;letter-spacing:0.15px">-84 ns</span></div>
 <div class="r" style="left:0px;top:15px">Seq:&nbsp; 4</div><div class="r" style="right:-0.3px;top:15px">50.0 ns</div>
 <div class="r" style="left:0px;top:28px">10.0 kS</div><div class="r" style="right:-0.3px;top:28px">20 GS/s</div>
</div>
<div class="box" style="left:698px;top:538px;width:96px;height:42.5px">
 <div class="hd" style="background:#fff;overflow:hidden"><span style="position:absolute;left:-0.2px;letter-spacing:0.1px">Синхронизация</span><span class="tag" style="right:0px;width:16px;top:1px;color:#fff">C1</span></div>
 <div class="r" style="left:0.3px;top:15px;letter-spacing:0.15px">Ждущий</div><div class="r" style="right:-0.8px;top:15px">-5.6 mV</div>
 <div class="r" style="left:0.3px;top:28px">Фронт</div><div class="r" style="right:-0.8px;top:28px;letter-spacing:0.25px">Положит.</div>
</div>
<div style="position:absolute;left:8.8px;top:580.5px;font-size:16px;line-height:18px;font-weight:bold;color:#0000ff;letter-spacing:-0.1px">LeCroy</div>
<div style="position:absolute;left:6px;top:597px;width:46px;height:2px;background:#0000ff"></div>
<div style="position:absolute;left:674px;top:584px;width:11px;height:16px;background:#c00000"></div>
<div style="position:absolute;left:675px;top:584px;font-size:13px;line-height:15px;color:#fff;white-space:nowrap;letter-spacing:-0.25px">Waiting for Trigger</div>
</div></body></html>
